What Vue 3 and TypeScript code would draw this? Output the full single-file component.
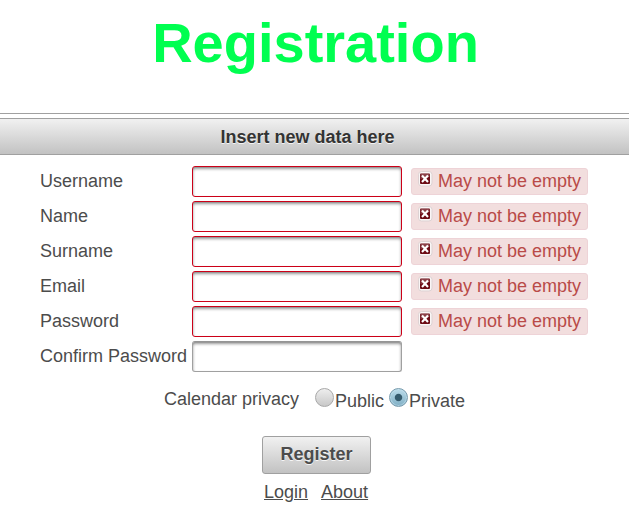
<script setup lang="ts">
import { reactive, ref } from 'vue'

interface Field {
  id: string
  label: string
  type: string
  error?: string
}

const message = 'May not be empty'
const fields: Field[] = [
  { id: 'username', label: 'Username', type: 'text', error: message },
  { id: 'name', label: 'Name', type: 'text', error: message },
  { id: 'surname', label: 'Surname', type: 'text', error: message },
  { id: 'email', label: 'Email', type: 'text', error: message },
  { id: 'password', label: 'Password', type: 'password', error: message },
  { id: 'confirm', label: 'Confirm Password', type: 'password' },
]
const values = reactive<Record<string, string>>({})
const privacy = ref<'Public' | 'Private'>('Private')
const options = ['Public', 'Private'] as const
</script>

<template>
  <main class="page">
    <h1 class="title">Registration</h1>
    <div class="rule"></div>
    <h2 class="panel-header">Insert new data here</h2>
    <form @submit.prevent>
      <div class="fields">
        <div v-for="f in fields" :key="f.id" class="row">
          <label :for="f.id">{{ f.label }}</label>
          <input :id="f.id" v-model="values[f.id]" :type="f.type" :class="{ invalid: f.error }" />
          <div v-if="f.error" class="message">
            <svg class="icon" width="15" height="16" viewBox="0 0 15 16">
              <rect x="0.5" y="0.5" width="13.5" height="14.5" rx="3" fill="#faf6f6" stroke="#ddd2d3" />
              <rect x="2" y="2.5" width="10" height="10.5" rx="1" fill="#6c0b14" />
              <path d="M2.5 3H11.5V6L2.5 8Z" fill="#8c4148" />
              <path d="M4 4.5L10 11M10 4.5L4 11" stroke="#fff" stroke-width="2.1" />
            </svg>
            <span>{{ f.error }}</span>
          </div>
        </div>
      </div>
      <div class="privacy">
        <span class="legend">Calendar privacy</span>
        <label v-for="o in options" :key="o" class="option">
          <input v-model="privacy" type="radio" name="privacy" :value="o" />
          <span>{{ o }}</span>
        </label>
      </div>
      <button class="register" type="submit">Register</button>
    </form>
    <nav class="links">
      <a href="#login">Login</a>
      <a href="#about">About</a>
    </nav>
  </main>
</template>

<style>
body {
  background: #fff;
}
</style>

<style scoped>
.page {
  box-sizing: border-box;
  height: 518px;
  overflow: hidden;
  font: 18px/20px "Liberation Sans", Arial, sans-serif;
  font-variant-ligatures: none;
  color: #4c4c4c;
}
.title {
  box-sizing: border-box;
  margin: 0;
  padding-top: 11px;
  height: 113px;
  font-size: 56px;
  line-height: 64px;
  text-align: center;
  text-indent: 2px;
  color: #00ff50;
}
.rule {
  height: 1px;
  margin-bottom: 4px;
  background: #a0a0a0;
}
.panel-header {
  box-sizing: border-box;
  height: 37px;
  margin: 0;
  padding: 8px 14px 0 0;
  border: solid #a0a0a0;
  border-width: 1px 0;
  background: linear-gradient(#f1f1f1, #c2c2c2);
  font-size: 18px;
  line-height: 20px;
  text-align: center;
  color: #333;
  text-shadow: 0 1px 0 rgba(255, 255, 255, 0.8);
}
.fields {
  padding: 9px 0 0 40px;
}
.row {
  display: grid;
  grid-template-columns: 152px 210px 177px;
  align-items: center;
  height: 35px;
}
.row > label {
  padding-bottom: 2px;
  white-space: nowrap;
}
.row > input {
  box-sizing: border-box;
  width: 210px;
  height: 31px;
  margin: 0;
  padding: 0 6px;
  border: 1px solid #a0a0a0;
  border-top-color: #949494;
  border-radius: 3px;
  outline: none;
  background: #fff;
  box-shadow: inset 0 1px 0 #999, inset 0 2px 3px rgba(0, 0, 0, 0.4);
  font: inherit;
}
.row > input.invalid {
  border-color: #cc0018;
}
.message {
  display: flex;
  box-sizing: border-box;
  width: 177px;
  height: 27px;
  margin-left: 9px;
  padding: 2px 0 0 6px;
  border: 1px solid #eed3d7;
  border-radius: 3px;
  background: #f2dede;
  color: #b94a48;
}
.icon {
  flex: none;
  margin-right: 5px;
}
.privacy {
  display: flex;
  height: 49px;
  padding: 13px 0 0 164px;
}
.legend {
  width: 151px;
  padding-top: 2px;
  white-space: nowrap;
}
.option {
  display: flex;
  margin-right: 5px;
}
.option span {
  padding-top: 4px;
  margin-left: 1px;
}
.option input {
  appearance: none;
  box-sizing: border-box;
  width: 19px;
  height: 19px;
  margin: 1px 0 0;
  border: 1px solid #a8a8a8;
  border-radius: 50%;
  background: linear-gradient(#eee, #c8c8c8);
}
.option input:checked {
  border-color: #779bad;
  background: radial-gradient(circle, #355b6d 0 3.2px, transparent 4.2px), linear-gradient(#bbdcea, #80afc5);
  box-shadow: inset 0 0 0 1px rgba(200, 228, 240, 0.55);
}
.register {
  display: block;
  box-sizing: border-box;
  width: 109px;
  height: 38px;
  margin: 0 0 0 262px;
  padding: 0 0 2px;
  border: 1px solid #a0a0a0;
  border-radius: 3px;
  background: linear-gradient(#f1f1f1, #c2c2c2);
  font: bold 18px/20px "Liberation Sans", Arial, sans-serif;
  color: #4c4c4c;
  text-shadow: 0 1px 0 rgba(255, 255, 255, 0.8);
}
.links {
  display: flex;
  gap: 13px;
  padding: 8px 0 0 264px;
}
.links a {
  color: inherit;
}
</style>
